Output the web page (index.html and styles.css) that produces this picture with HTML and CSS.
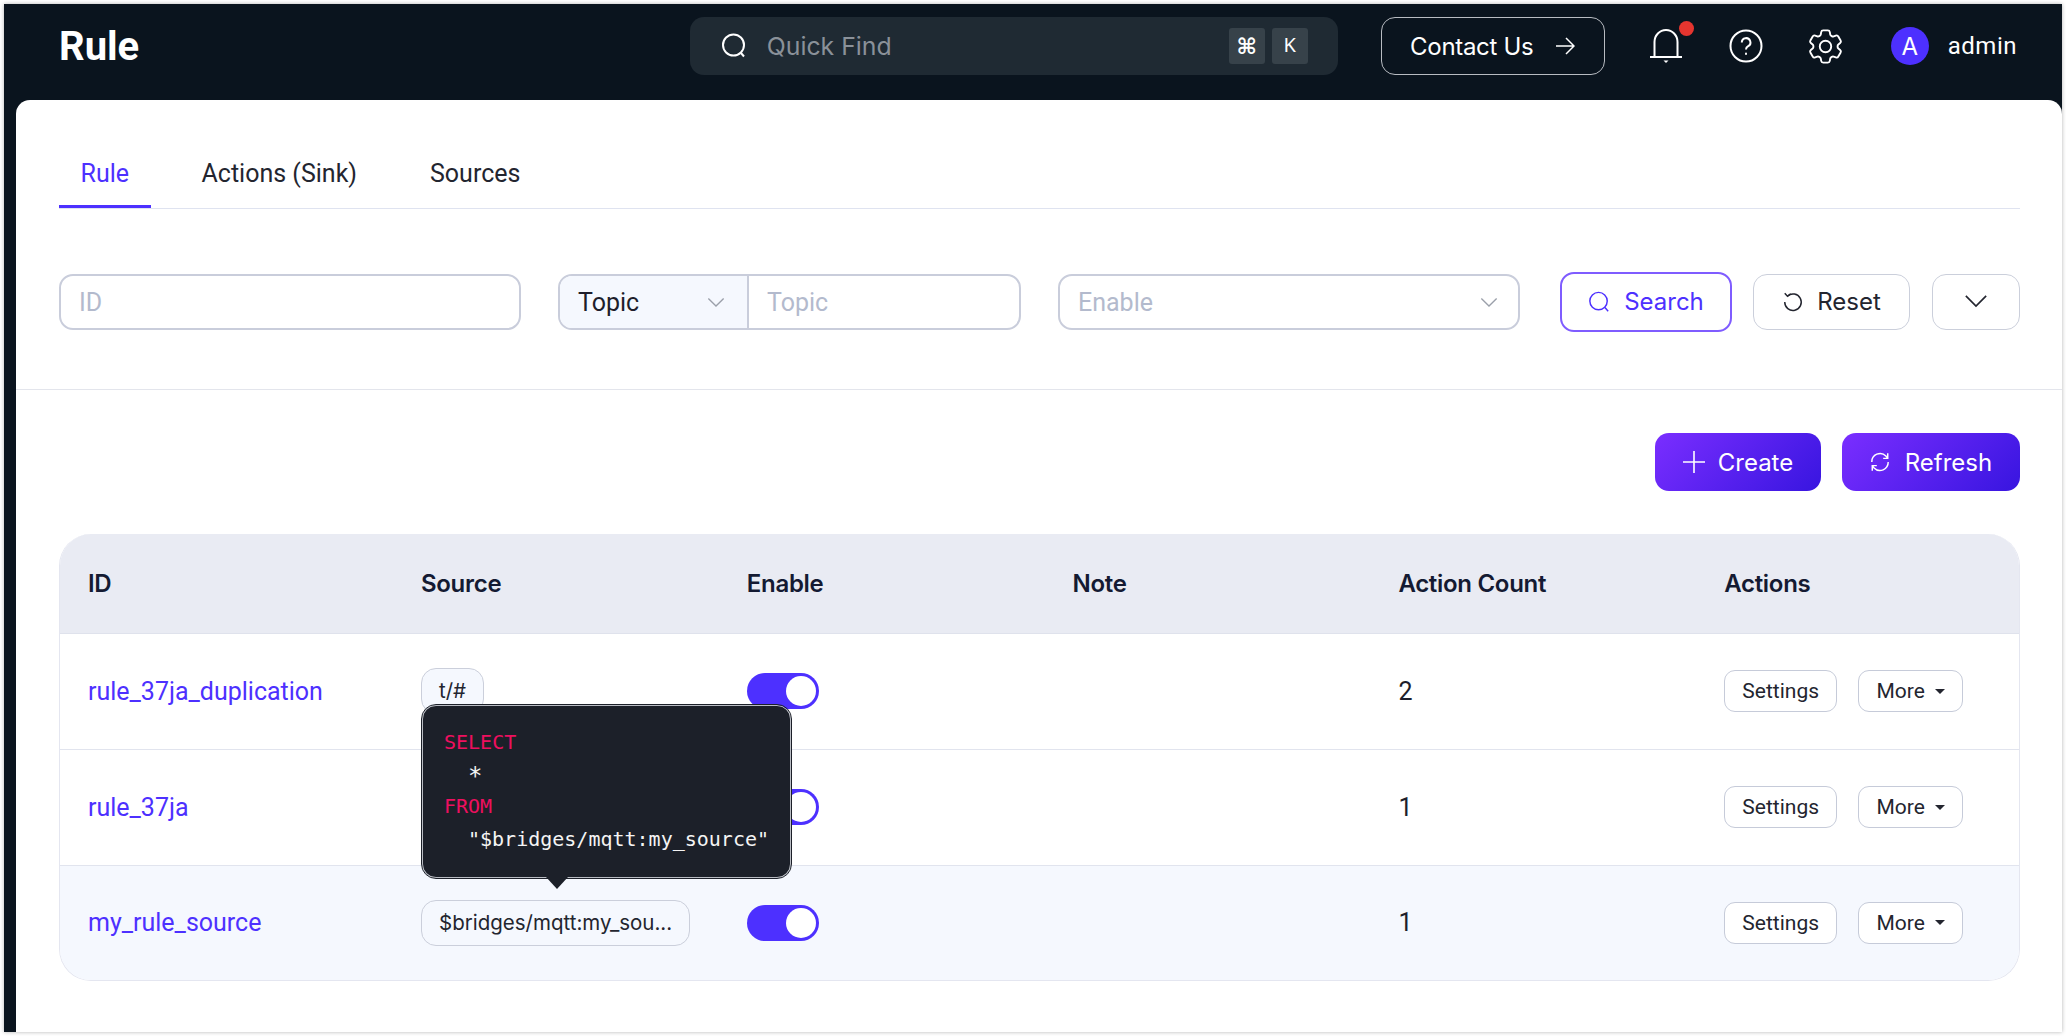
FILE: index.html
```html
<!doctype html>
<html>
<head>
<title>Rule</title>
<meta charset="utf-8" />
<link rel="stylesheet" href="styles.css">
</head>

<body>
<div class="window">
	<header class="topbar">
		<h1 class="page-title">Rule</h1>
		<div class="quick-find">
			<svg class="quick-icon" viewBox="0 0 26 26"><circle cx="12.5" cy="12" r="10.5"/><path d="M20 20l3 3.5"/></svg>
			<span class="quick-text">Quick Find</span>
			<kbd class="key key-cmd">⌘</kbd>
			<kbd class="key">K</kbd>
		</div>
		<a class="contact">Contact Us
			<svg class="contact-arrow" viewBox="0 0 20 20"><path d="M1 10h18M11 2l8 8-8 8"/></svg>
		</a>
		<div class="top-icon bell">
			<svg viewBox="0 0 40 40"><path d="M8.5 30.5V16a11.5 12 0 0 1 23 0v14.5"/><path d="M4 31h32"/><path class="solid" d="M17.5 34.5h5L20 37z"/></svg>
			<i class="badge"></i>
		</div>
		<div class="top-icon">
			<svg viewBox="0 0 40 40"><circle cx="20" cy="20" r="15.5"/><path d="M15.8 16.4a4.3 4.3 0 1 1 6.4 3.8c-1.4.8-2.2 1.600-2.200 3.300"/><path class="dot" d="M20 27.500v.5"/></svg>
		</div>
		<div class="top-icon">
			<svg viewBox="0 0 24 24" class="gear"><path d="M9.594 3.94c.09-.542.56-.94 1.11-.94h2.593c.55 0 1.02.398 1.11.94l.213 1.281c.063.374.313.686.645.87.074.04.147.083.22.127.324.196.72.257 1.075.124l1.217-.456a1.125 1.125 0 011.37.49l1.296 2.247a1.125 1.125 0 01-.26 1.431l-1.003.827c-.293.24-.438.613-.431.992a6.759 6.759 0 010 .255c-.007.378.138.75.43.99l1.005.828c.424.35.534.954.26 1.43l-1.298 2.247a1.125 1.125 0 01-1.369.491l-1.217-.456c-.355-.133-.75-.072-1.076.124a6.57 6.57 0 01-.22.128c-.331.183-.581.495-.644.869l-.213 1.28c-.09.543-.56.941-1.11.941h-2.594c-.55 0-1.02-.398-1.11-.94l-.213-1.281c-.062-.374-.312-.686-.644-.87a6.52 6.52 0 01-.22-.127c-.325-.196-.72-.257-1.076-.124l-1.217.456a1.125 1.125 0 01-1.369-.49l-1.297-2.247a1.125 1.125 0 01.26-1.431l1.004-.827c.292-.24.437-.613.43-.992a6.932 6.932 0 010-.255c.007-.378-.138-.75-.43-.99l-1.004-.828a1.125 1.125 0 01-.26-1.43l1.297-2.247a1.125 1.125 0 011.37-.491l1.216.456c.356.133.751.072 1.076-.124.072-.044.146-.087.22-.128.332-.183.582-.495.644-.869l.214-1.281z"/><circle cx="12" cy="12" r="3.200"/></svg>
		</div>
		<div class="avatar">A</div>
		<span class="username">admin</span>
	</header>

	<main class="card">
		<nav class="tabs">
			<a class="tab tab-active">Rule</a>
			<a class="tab">Actions (Sink)</a>
			<a class="tab">Sources</a>
		</nav>

		<form class="filters">
			<div class="field field-id"><span class="placeholder">ID</span></div>
			<div class="field field-group">
				<div class="group-select">Topic
					<svg class="chevron" viewBox="0 0 20 12"><path d="M1.500 1.500L10 10l8.500-8.500"/></svg>
				</div>
				<span class="placeholder group-input">Topic</span>
			</div>
			<div class="field field-enable"><span class="placeholder">Enable</span>
				<svg class="chevron" viewBox="0 0 20 12"><path d="M1.500 1.500L10 10l8.500-8.500"/></svg>
			</div>
			<button class="btn btn-search" type="button">
				<svg class="btn-icon" viewBox="0 0 24 24"><circle cx="11.500" cy="11" r="9.500"/><path d="M18.500 18l3.500 4"/></svg>
				Search
			</button>
			<button class="btn btn-reset" type="button">
				<svg class="btn-icon" viewBox="0 0 24 24"><path d="M6 5.500a9 9 0 1 1-3 6.500"/><path d="M3 2.500l3 3.200 3.500-2.500"/></svg>
				Reset
			</button>
			<button class="btn btn-more" type="button">
				<svg viewBox="0 0 26 16"><path d="M2 2l11 11L24 2"/></svg>
			</button>
		</form>

		<div class="toolbar">
			<button class="btn-primary btn-create" type="button">
				<svg class="btn-icon" viewBox="0 0 22 22"><path d="M11 0v22M0 11h22"/></svg>
				Create
			</button>
			<button class="btn-primary btn-refresh" type="button">
				<svg class="btn-icon icon-refresh" viewBox="0 0 22 22"><path d="M2 11a9 9 0 0 1 15.500-6.500l1.500 2"/><path d="M20 11a9 9 0 0 1-15.500 6.500l-1.500-2"/><path d="M19.500 1.500v5.500h-5M2.500 20.500V15h5"/></svg>
				Refresh
			</button>
		</div>

		<div class="table-wrap">
			<table class="rules">
				<thead>
					<tr>
						<th class="col-id">ID</th>
						<th>Source</th>
						<th>Enable</th>
						<th>Note</th>
						<th>Action Count</th>
						<th class="col-actions">Actions</th>
					</tr>
				</thead>
				<tbody>
					<tr>
						<td><a class="rule-link">rule_37ja_duplication</a></td>
						<td><span class="tag tag-light">t/#</span></td>
						<td><span class="switch"></span></td>
						<td></td>
						<td>2</td>
						<td><button class="btn-small" type="button">Settings</button><button class="btn-small btn-dropdown" type="button">More<i class="caret"></i></button></td>
					</tr>
					<tr>
						<td><a class="rule-link">rule_37ja</a></td>
						<td></td>
						<td><span class="switch"></span></td>
						<td></td>
						<td>1</td>
						<td><button class="btn-small" type="button">Settings</button><button class="btn-small btn-dropdown" type="button">More<i class="caret"></i></button></td>
					</tr>
					<tr class="row-hover">
						<td><a class="rule-link">my_rule_source</a></td>
						<td>
							<span class="tag tag-source">$bridges/mqtt:my_sou...
								<div class="sql-tip">
									<div class="kw">SELECT</div>
									<div class="sql-indent sql-star">*</div>
									<div class="kw">FROM</div>
									<div class="sql-indent">"$bridges/mqtt:my_source"</div>
								</div>
							</span>
						</td>
						<td><span class="switch"></span></td>
						<td></td>
						<td>1</td>
						<td><button class="btn-small" type="button">Settings</button><button class="btn-small btn-dropdown" type="button">More<i class="caret"></i></button></td>
					</tr>
				</tbody>
			</table>
		</div>
	</main>
</div>
</body>
</html>
```

FILE: styles.css
```css
* { box-sizing: border-box; }
html, body { margin: 0; height: 100%; }
body { padding: 4px; background: #fff; font-family: Inter, "Liberation Sans", sans-serif; color: #1d1e2b; overflow: hidden; }
svg { fill: none; stroke: currentColor; stroke-width: 2; display: block; }
button { font-family: inherit; cursor: pointer; }

.window { height: 1028px; display: flex; flex-direction: column; background: #0a141e; box-shadow: 0 0 4px rgba(0,0,0,0.3); }

/* top bar */
.topbar { height: 96px; flex: none; display: flex; align-items: center; padding: 0 45px 12px 55px; color: #fff; }
.page-title { margin: 2px auto 0 0; font: 700 40px/1 Roboto, sans-serif; }
.quick-find { width: 648px; height: 58px; display: flex; align-items: center; padding: 0 30px 0 31px; background: #1f2a33; border-radius: 14px; }
.quick-icon { width: 26px; height: 26px; margin-right: 20px; }
.quick-text { font: 24.800px Inter, sans-serif; color: #8a9199; margin-right: auto; }
.key { width: 36px; height: 36px; display: flex; align-items: center; justify-content: center; background: #37424a; border-radius: 3px; color: #fff; font: 20px "Noto Sans", sans-serif; margin-left: 7px; padding-bottom: 3px; }
.key-cmd { font: 700 22px "DejaVu Sans", sans-serif; padding: 0; }
.contact { width: 224px; height: 58px; margin-left: 43px; display: flex; align-items: center; justify-content: center; gap: 22px; border: 1px solid #b8bcc2; border-radius: 14px; font-size: 24px; letter-spacing: -0.3px; }
.contact-arrow { width: 20px; height: 20px; stroke-width: 1.500; }
.top-icon { position: relative; width: 40px; height: 40px; margin-left: 40px; }
.contact + .top-icon { margin-left: 41px; }
.gear { width: 43px; height: 43px; margin: -1.500px; stroke-width: 1.050; }
.solid { fill: #fff; stroke: none; }
.dot { stroke-linecap: round; }
.badge { position: absolute; top: -5px; right: -8px; width: 15px; height: 15px; border-radius: 50%; background: #e5352f; }
.avatar { width: 38px; height: 38px; margin-left: 45px; border-radius: 50%; background: #4d30ff; display: flex; align-items: center; justify-content: center; font: 24px Inter, sans-serif; }
.username { margin-left: 19px; font: 24px Roboto, sans-serif; letter-spacing: 0.5px; }

/* main card */
.card { flex: 1; margin-left: 12px; background: #fff; border-radius: 14px 14px 0 0; padding-top: 42px; overflow: hidden; }
.tabs { display: flex; gap: 29px; margin: 0 42px 0 43px; height: 67px; border-bottom: 1px solid #dfe3f0; }
.tab { height: 66px; padding: 0 22px; font: 25px/64px Roboto, sans-serif; color: #23252f; }
.tab-active { padding: 0 21.500px; color: #4d30ff; border-bottom: 3px solid #4d30ff; }

.filters { display: flex; align-items: center; height: 181px; padding: 65px 42px 60px 43px; border-bottom: 1px solid #e3e5ec; }
.field { height: 56px; display: flex; align-items: center; padding-top: 2px; border: 2px solid #c9cddb; border-radius: 14px; font: 25px Roboto, sans-serif; background: #fff; }
.placeholder { color: #b3bacd; padding-left: 18px; }
.field-id { width: 462px; }
.field-group { width: 463px; margin-left: 37px; overflow: hidden; padding-top: 0; }
.group-select { width: 189px; height: 100%; display: flex; align-items: center; justify-content: space-between; padding: 2px 22px 0 18px; background: #f5f8fe; border-right: 2px solid #c9cddb; color: #1d1e2b; }
.group-input { padding: 2px 0 0 18px; }
.field-enable { width: 462px; margin-left: 37px; justify-content: space-between; padding-right: 20px; }
.chevron { width: 18px; height: 11px; color: #9ba0aa; stroke-width: 1.500; }
.btn { height: 56px; display: flex; align-items: center; justify-content: center; background: #fff; border: 1px solid #cbcfdb; border-radius: 14px; font-size: 24px; color: #23252f; padding: 0; }
.btn-icon { width: 22px; height: 22px; stroke-width: 1.600; }
.btn-search { width: 172px; height: 60px; margin-left: 40px; gap: 14px; border: 2px solid #7f5cff; color: #4d30ff; }
.btn-reset { width: 157px; margin-left: 21px; gap: 13px; }
.btn-more { width: 88px; margin-left: 22px; }
.btn-more svg { width: 24px; height: 15px; stroke-width: 1.800; }

.toolbar { display: flex; justify-content: flex-end; gap: 21px; margin: 43px 42px 43px 0; }
.btn-primary { height: 58px; display: flex; align-items: center; justify-content: center; gap: 13px; border: 0; border-radius: 14px; background: linear-gradient(135deg, #7a2eff, #3815e0); color: #fff; font-size: 24px; padding: 0; }
.btn-create { width: 166px; }
.btn-refresh { width: 178px; gap: 15px; }
.icon-refresh { width: 20px; height: 20px; }

/* table */
.table-wrap { margin: 0 42px 0 43px; border: 1px solid #e4e6f0; border-top: 0; border-radius: 32px; overflow: hidden; }
.rules { width: 100%; table-layout: fixed; border-collapse: collapse; font-family: Roboto, sans-serif; }
.rules th { width: 325.800px; height: 99px; padding: 0 28px; background: #e9ebf3; text-align: left; font: 600 24px Inter, sans-serif; letter-spacing: -0.3px; color: #141a32; border-bottom: 1px solid #dfe2ec; }
.rules .col-id { width: 333px; }
.rules .col-actions { width: auto; }
.rules td { height: 116px; padding: 0 28px; font-size: 25px; color: #1d1e2b; border-bottom: 1px solid #e1e4ee; }
.rules tr:last-child td { border-bottom: 0; height: 115px; }
.row-hover td { background: #f5f8fe; }
.rule-link { color: #4d30ff; }
.tag { position: relative; display: inline-block; height: 46px; padding: 0 17px; border: 1px solid #cbcfdb; border-radius: 15px; font: 20.500px/44px Inter, sans-serif; color: #23252f; white-space: nowrap; }
.tag-light { background: #f5f8fe; }
.tag-source { width: 269px; }

.sql-tip { position: absolute; left: 0; bottom: 67px; width: 369px; height: 173px; padding: 20px 21px; background: #1c2029; border: 1px solid #b9bcc3; outline: 1px solid #1c2029; border-radius: 14px; font: 20px/32.300px "DejaVu Sans Mono", monospace; color: #f4f4f4; z-index: 5; }
.sql-tip::after { content: ""; position: absolute; left: 123px; bottom: -12px; border-style: solid; border-width: 12px 11px 0; border-color: #1c2029 transparent transparent; }
.kw { color: #ee0f5f; }
.sql-indent { padding-left: 24px; }
.sql-star { height: 32.300px; padding-top: 2px; font-size: 24px; }

.switch { display: block; position: relative; width: 72px; height: 36px; border-radius: 18px; background: #4d30ff; }
.switch::after { content: ""; position: absolute; right: 3px; top: 3px; width: 30px; height: 30px; border-radius: 50%; background: #fff; }

.btn-small { height: 42px; width: 113px; background: #fff; border: 1px solid #c6cbd9; border-radius: 11px; font-size: 21px; color: #23252f; padding: 0; vertical-align: middle; }
.btn-dropdown { width: 105px; margin-left: 21px; display: inline-flex; align-items: center; justify-content: center; gap: 10px; }
.caret { border-style: solid; border-width: 5px 5px 0; border-color: #23252f transparent transparent; }
```
